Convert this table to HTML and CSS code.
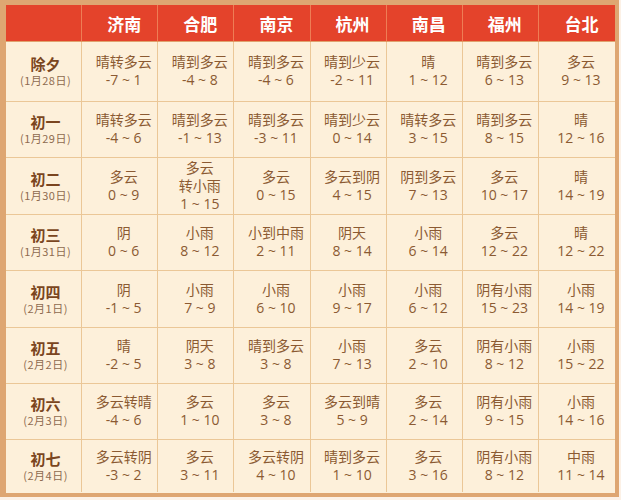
FILE: index.html
```html
<!DOCTYPE html>
<html lang="zh-CN">
<head>
<meta charset="utf-8">
<title>春节天气</title>
<link rel="stylesheet" href="styles.css">
</head>
<body>
<div class="frame">
  <div class="grid">
    <div class="hd"></div>
    <div class="hd">济南</div>
    <div class="hd">合肥</div>
    <div class="hd">南京</div>
    <div class="hd">杭州</div>
    <div class="hd">南昌</div>
    <div class="hd">福州</div>
    <div class="hd last">台北</div>

    <div class="lbl"><b>除夕</b><span>(1月28日)</span></div>
    <div class="c">晴转多云<br>-7 ~ 1</div>
    <div class="c">晴到多云<br>-4 ~ 8</div>
    <div class="c">晴到多云<br>-4 ~ 6</div>
    <div class="c">晴到少云<br>-2 ~ 11</div>
    <div class="c">晴<br>1 ~ 12</div>
    <div class="c">晴到多云<br>6 ~ 13</div>
    <div class="c last">多云<br>9 ~ 13</div>

    <div class="lbl"><b>初一</b><span>(1月29日)</span></div>
    <div class="c">晴转多云<br>-4 ~ 6</div>
    <div class="c">晴到多云<br>-1 ~ 13</div>
    <div class="c">晴到多云<br>-3 ~ 11</div>
    <div class="c">晴到少云<br>0 ~ 14</div>
    <div class="c">晴转多云<br>3 ~ 15</div>
    <div class="c">晴到多云<br>8 ~ 15</div>
    <div class="c last">晴<br>12 ~ 16</div>

    <div class="lbl"><b>初二</b><span>(1月30日)</span></div>
    <div class="c">多云<br>0 ~ 9</div>
    <div class="c">多云<br>转小雨<br>1 ~ 15</div>
    <div class="c">多云<br>0 ~ 15</div>
    <div class="c">多云到阴<br>4 ~ 15</div>
    <div class="c">阴到多云<br>7 ~ 13</div>
    <div class="c">多云<br>10 ~ 17</div>
    <div class="c last">晴<br>14 ~ 19</div>

    <div class="lbl"><b>初三</b><span>(1月31日)</span></div>
    <div class="c">阴<br>0 ~ 6</div>
    <div class="c">小雨<br>8 ~ 12</div>
    <div class="c">小到中雨<br>2 ~ 11</div>
    <div class="c">阴天<br>8 ~ 14</div>
    <div class="c">小雨<br>6 ~ 14</div>
    <div class="c">多云<br>12 ~ 22</div>
    <div class="c last">晴<br>12 ~ 22</div>

    <div class="lbl"><b>初四</b><span>(2月1日)</span></div>
    <div class="c">阴<br>-1 ~ 5</div>
    <div class="c">小雨<br>7 ~ 9</div>
    <div class="c">小雨<br>6 ~ 10</div>
    <div class="c">小雨<br>9 ~ 17</div>
    <div class="c">小雨<br>6 ~ 12</div>
    <div class="c">阴有小雨<br>15 ~ 23</div>
    <div class="c last">小雨<br>14 ~ 19</div>

    <div class="lbl"><b>初五</b><span>(2月2日)</span></div>
    <div class="c">晴<br>-2 ~ 5</div>
    <div class="c">阴天<br>3 ~ 8</div>
    <div class="c">晴到多云<br>3 ~ 8</div>
    <div class="c">小雨<br>7 ~ 13</div>
    <div class="c">多云<br>2 ~ 10</div>
    <div class="c">阴有小雨<br>8 ~ 12</div>
    <div class="c last">小雨<br>15 ~ 22</div>

    <div class="lbl"><b>初六</b><span>(2月3日)</span></div>
    <div class="c">多云转晴<br>-4 ~ 6</div>
    <div class="c">多云<br>1 ~ 10</div>
    <div class="c">多云<br>3 ~ 8</div>
    <div class="c">多云到晴<br>5 ~ 9</div>
    <div class="c">多云<br>2 ~ 14</div>
    <div class="c">阴有小雨<br>9 ~ 15</div>
    <div class="c last">小雨<br>14 ~ 16</div>

    <div class="lbl bot"><b>初七</b><span>(2月4日)</span></div>
    <div class="c bot">多云转阴<br>-3 ~ 2</div>
    <div class="c bot">多云<br>3 ~ 11</div>
    <div class="c bot">多云转阴<br>4 ~ 10</div>
    <div class="c bot">晴到多云<br>1 ~ 10</div>
    <div class="c bot">多云<br>3 ~ 16</div>
    <div class="c bot">阴有小雨<br>8 ~ 12</div>
    <div class="c bot last">中雨<br>11 ~ 14</div>
  </div>
</div>
</body>
</html>
```

FILE: styles.css
```css
html, body {
  margin: 0;
  padding: 0;
  background: #fcf1e6;
}
body {
  width: 621px;
  height: 500px;
  overflow: hidden;
  font-family: "Open Sans", "Noto Sans CJK SC", sans-serif;
}
.frame {
  width: 619px;
  height: 497px;
  box-sizing: border-box;
  background: #dea672;
  padding: 5px 4px 4px 6px;
}
.grid {
  display: grid;
  grid-template-columns: repeat(8, 1fr);
  grid-template-rows: 37px 60px 56px 57px 56px 57px 56px 56px 52px;
  background: #fdf0da;
  height: 488px;
}
.hd {
  background: #e4432b;
  color: #ffffff;
  font-family: "Noto Sans CJK SC", sans-serif;
  font-weight: 700;
  font-size: 17px;
  display: flex;
  align-items: center;
  justify-content: center;
  padding-left: 9px;
  border-right: 1px solid #ee7d55;
  border-bottom: 1px solid #e0a26e;
}
.c, .lbl {
  text-align: center;
  border-right: 1px solid #ebc797;
  border-bottom: 1px solid #ebc797;
  color: #8b5a32;
  font-size: 14px;
  line-height: 18px;
  padding-left: 8px;
  padding-bottom: 1px;
}
.c {
  display: block;
  align-content: center;
}
.lbl {
  display: flex;
  flex-direction: column;
  align-items: center;
  justify-content: center;
  padding-left: 4px;
}
.lbl b {
  font-family: "Noto Sans CJK SC", sans-serif;
  font-weight: 700;
  font-size: 15px;
  line-height: 19px;
  color: #7a4520;
}
.lbl span {
  font-family: "Noto Sans CJK SC", sans-serif;
  font-size: 11px;
  line-height: 15px;
  letter-spacing: 0.5px;
  color: #8e6b4f;
}
.last {
  border-right: none;
}
.bot {
  border-bottom: none;
}
```
